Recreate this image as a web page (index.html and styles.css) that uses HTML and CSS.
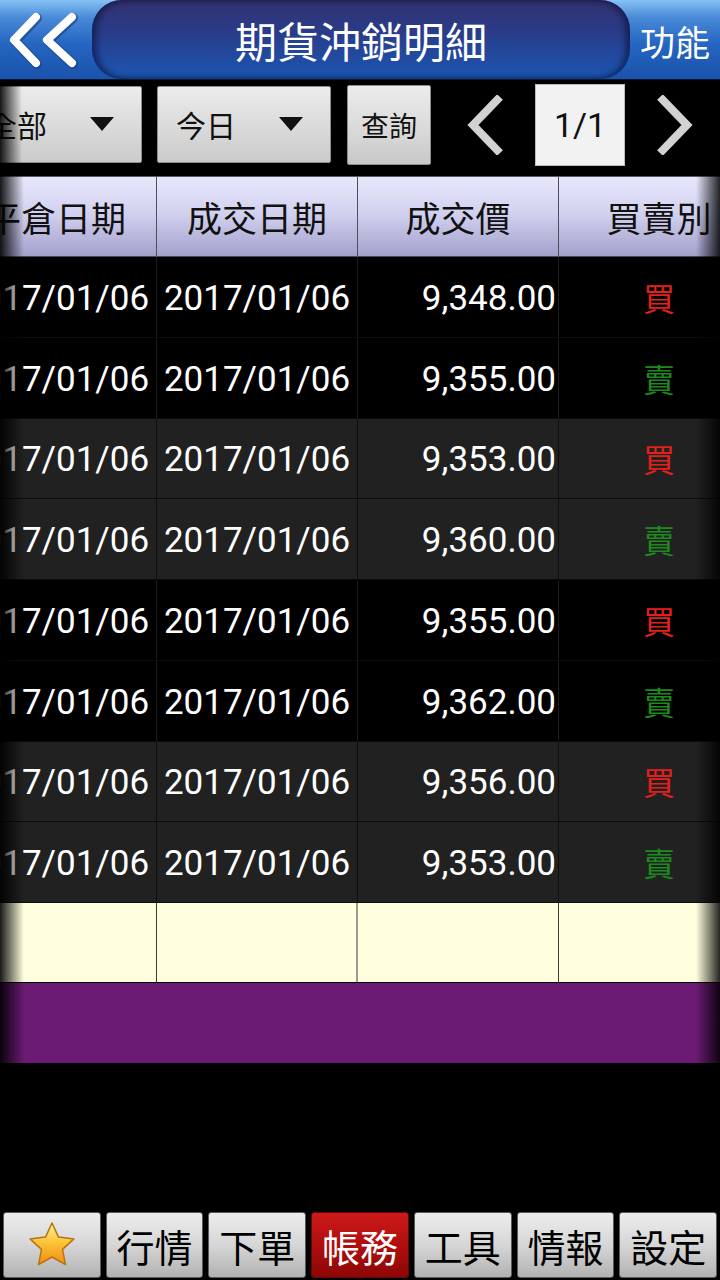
FILE: index.html
```html
<!DOCTYPE html>
<html lang="zh-Hant">
<head>
  <meta charset="UTF-8" />
  <meta name="viewport" content="width=device-width, initial-scale=1.0"/>
  <title>期貨沖銷明細</title>
  <link rel="stylesheet" href="styles.css">
</head>
<body>

  <!-- Header -->
  <header class="topbar">
    <a href="#" class="back-btn">
      <svg width="80" height="60" viewBox="0 0 80 60">
        <polyline class="chev-shadow" points="31,8 9,31 31,54" />
        <polyline class="chev-shadow" points="67,8 42,31 67,54" />
        <polyline class="chev" points="30,7 8,30 30,53" />
        <polyline class="chev" points="66,7 41,30 66,53" />
      </svg>
    </a>
    <h1 class="title">期貨沖銷明細</h1>
    <a href="#" class="func-btn">功能</a>
  </header>

  <!-- Filters -->
  <div class="toolbar">
    <button class="dropdown dropdown-first">全部<span class="caret"></span></button>
    <button class="dropdown">今日<span class="caret"></span></button>
    <button class="query-btn">查詢</button>
    <svg class="pager-arrow pager-prev" width="40" height="60" viewBox="0 0 40 60">
      <polyline points="35,2 8,30 35,58" />
    </svg>
    <div class="page-box">1/1</div>
    <svg class="pager-arrow pager-next" width="40" height="60" viewBox="0 0 40 60">
      <polyline points="5,2 32,30 5,58" />
    </svg>
  </div>

  <!-- Detail table -->
  <div class="grid-wrap">
    <div class="grid">
      <div class="row head">
        <div class="cell">平倉日期</div>
        <div class="cell">成交日期</div>
        <div class="cell">成交價</div>
        <div class="cell">買賣別</div>
      </div>

      <div class="row dark">
        <div class="cell">2017/01/06</div><div class="cell">2017/01/06</div>
        <div class="cell price">9,348.00</div><div class="cell side buy">買</div>
      </div>
      <div class="row dark">
        <div class="cell">2017/01/06</div><div class="cell">2017/01/06</div>
        <div class="cell price">9,355.00</div><div class="cell side sell">賣</div>
      </div>
      <div class="row gray">
        <div class="cell">2017/01/06</div><div class="cell">2017/01/06</div>
        <div class="cell price">9,353.00</div><div class="cell side buy">買</div>
      </div>
      <div class="row gray">
        <div class="cell">2017/01/06</div><div class="cell">2017/01/06</div>
        <div class="cell price">9,360.00</div><div class="cell side sell">賣</div>
      </div>
      <div class="row dark">
        <div class="cell">2017/01/06</div><div class="cell">2017/01/06</div>
        <div class="cell price">9,355.00</div><div class="cell side buy">買</div>
      </div>
      <div class="row dark">
        <div class="cell">2017/01/06</div><div class="cell">2017/01/06</div>
        <div class="cell price">9,362.00</div><div class="cell side sell">賣</div>
      </div>
      <div class="row gray">
        <div class="cell">2017/01/06</div><div class="cell">2017/01/06</div>
        <div class="cell price">9,356.00</div><div class="cell side buy">買</div>
      </div>
      <div class="row gray">
        <div class="cell">2017/01/06</div><div class="cell">2017/01/06</div>
        <div class="cell price">9,353.00</div><div class="cell side sell">賣</div>
      </div>

      <div class="row total">
        <div class="cell"></div><div class="cell"></div>
        <div class="cell"></div><div class="cell"></div>
      </div>
    </div>
    <div class="summary-bar"></div>
  </div>

  <div class="spacer"></div>

  <!-- Bottom nav -->
  <nav class="tabbar">
    <a href="#" class="tab">
      <svg width="50" height="48" viewBox="0 0 50 48">
        <defs>
          <linearGradient id="starFill" x1="0" y1="0" x2="0" y2="1">
            <stop offset="0" stop-color="#fff0a0"/>
            <stop offset="0.45" stop-color="#fcc63a"/>
            <stop offset="1" stop-color="#f08a12"/>
          </linearGradient>
        </defs>
        <polygon points="25,2 31.5,16.1 46.9,17.9 35.5,28.4 38.5,43.6 25,36 11.5,43.6 14.5,28.4 3.1,17.9 18.5,16.1"
                 fill="url(#starFill)" stroke="#b8740e" stroke-width="1.5" stroke-linejoin="round"/>
      </svg>
    </a>
    <a href="#" class="tab">行情</a>
    <a href="#" class="tab">下單</a>
    <a href="#" class="tab active">帳務</a>
    <a href="#" class="tab">工具</a>
    <a href="#" class="tab">情報</a>
    <a href="#" class="tab">設定</a>
  </nav>

</body>
</html>
```

FILE: styles.css
```css
* {
  box-sizing: border-box;
  margin: 0;
  padding: 0;
}

html, body {
  width: 720px;
  height: 1280px;
  background: #000;
  overflow: hidden;
}

body {
  font-family: Roboto, "Noto Sans CJK TC", sans-serif;
  display: flex;
  flex-direction: column;
}

a {
  text-decoration: none;
}

/* Header */
.topbar {
  height: 80px;
  display: flex;
  background: linear-gradient(#86c2f4 0%, #4a8ad8 22%, #2566c2 55%, #1a52aa 100%);
  border-bottom: 1px solid #08173a;
}

.back-btn {
  width: 92px;
  display: flex;
  align-items: center;
  padding-left: 6px;
}

.chev {
  fill: none;
  stroke: #fff;
  stroke-width: 8;
  stroke-linecap: round;
  stroke-linejoin: round;
}

.chev-shadow {
  fill: none;
  stroke: #1b3c7a;
  stroke-width: 10;
  stroke-linecap: round;
  stroke-linejoin: round;
  opacity: 0.6;
}

.title {
  width: 538px;
  display: flex;
  align-items: center;
  justify-content: center;
  color: #fff;
  font-size: 42px;
  font-weight: normal;
  font-family: "Noto Sans CJK TC", sans-serif;
  background: linear-gradient(#333270 0%, #2b3a86 35%, #22499e 70%, #1c56b2 100%);
  border-radius: 30px;
  box-shadow: inset 5px 0 6px rgba(10, 14, 50, 0.55), inset -5px 0 6px rgba(10, 14, 50, 0.55);
}

.func-btn {
  flex: 1;
  display: flex;
  align-items: center;
  justify-content: center;
  color: #fff;
  font-size: 35px;
  font-family: "Noto Sans CJK TC", sans-serif;
  padding-top: 2px;
}

/* Filters */
.toolbar {
  height: 90px;
  display: flex;
  align-items: center;
  position: relative;
  overflow: hidden;
}

.toolbar::before {
  content: "";
  position: absolute;
  left: 0;
  top: 0;
  bottom: 0;
  width: 22px;
  background: linear-gradient(to right, rgba(0, 0, 0, 0.9), rgba(0, 0, 0, 0));
}

.dropdown {
  width: 174px;
  height: 77px;
  margin-right: 15px;
  margin-bottom: 2px;
  display: flex;
  align-items: center;
  justify-content: space-between;
  padding: 0 27px 0 18px;
  font-family: "Noto Sans CJK TC", sans-serif;
  font-size: 30px;
  color: #111;
  background: linear-gradient(#ececec, #d8d8d8 60%, #cbcbcb);
  border: 1px solid #8e8e8e;
  border-radius: 2px;
}

.dropdown-first {
  margin-left: -32px;
}

.caret {
  width: 0;
  height: 0;
  border-left: 12px solid transparent;
  border-right: 12px solid transparent;
  border-top: 14px solid #111;
}

.query-btn {
  width: 84px;
  height: 80px;
  margin-left: 1px;
  font-family: "Noto Sans CJK TC", sans-serif;
  font-size: 28px;
  color: #111;
  background: linear-gradient(#ececec, #d8d8d8 60%, #c8c8c8);
  border: 1px solid #8e8e8e;
  border-radius: 2px;
}

.pager-arrow polyline {
  fill: none;
  stroke: #d2d2d2;
  stroke-width: 8;
}

.pager-prev {
  margin-left: 34px;
}

.page-box {
  width: 90px;
  height: 82px;
  margin-left: 30px;
  display: flex;
  align-items: center;
  justify-content: center;
  font-size: 34px;
  color: #111;
  background: #f2f2f2;
  border: 1px solid #bdbdbd;
}

.pager-next {
  margin-left: 30px;
}

/* Table */
.grid-wrap {
  margin-top: 6px;
  position: relative;
  overflow: hidden;
}

.grid-wrap::before,
.grid-wrap::after {
  content: "";
  position: absolute;
  top: 0;
  bottom: 0;
  width: 24px;
  z-index: 2;
}

.grid-wrap::before {
  left: 0;
  background: linear-gradient(to right, rgba(0, 0, 0, 0.9), rgba(0, 0, 0, 0));
}

.grid-wrap::after {
  right: 0;
  background: linear-gradient(to left, rgba(0, 0, 0, 0.85), rgba(0, 0, 0, 0));
}

.grid {
  width: 804px;
  margin-left: -44px;
}

.row {
  display: grid;
  grid-template-columns: repeat(4, 201px);
  height: 80.75px;
  border-bottom: 1px solid #0c0c0c;
}

.cell {
  display: flex;
  align-items: center;
  justify-content: center;
  border-right: 1px solid #1c1c1c;
  color: #fff;
  font-size: 35px;
  white-space: nowrap;
  padding-top: 3px;
}

.row.head {
  height: 81px;
  border-top: 1px solid #5a5a6a;
  border-bottom: 1px solid #4a4a5e;
  background: linear-gradient(#e8e8fc 0%, #d2d2f0 45%, #a3a1cb 100%);
}

.row.head .cell {
  color: #111;
  font-size: 35px;
  font-family: "Noto Sans CJK TC", sans-serif;
  border-right-color: #4e4e5c;
  padding-top: 0;
}

.row.dark {
  background: #000;
}

.row.gray {
  background: #212121;
}

.row.gray .cell {
  border-right-color: #0e0e0e;
}

.cell.price {
  justify-content: flex-end;
  padding-right: 2px;
}

.cell.side {
  font-size: 32px;
  font-family: "Noto Sans CJK TC", sans-serif;
  padding-top: 0;
}

.buy {
  color: #e2201c;
}

.sell {
  color: #1d8a1d;
}

.row.total {
  height: 80px;
  background: #ffffe0;
  border-bottom: 1px solid #000;
}

.row.total .cell {
  border-right-color: #3a3a3a;
}

.row.total .cell:nth-child(2) {
  border-right: 2px solid #9a9a92;
}

.summary-bar {
  height: 80px;
  background: #6a1a72;
}

.spacer {
  flex: 1;
}

/* Bottom nav */
.tabbar {
  height: 70px;
  display: grid;
  grid-template-columns: repeat(7, 1fr);
  gap: 5px;
  padding: 2px 3px;
}

.tab {
  display: flex;
  align-items: center;
  justify-content: center;
  font-family: "Noto Sans CJK TC", sans-serif;
  font-size: 38px;
  color: #000;
  background: linear-gradient(#ededed, #d6d6d6 50%, #b2b2b2);
  border: 1px solid #5a5a5a;
  border-radius: 3px;
}

.tab.active {
  color: #fff;
  background: linear-gradient(#cc1a1a, #b00e0e 50%, #8e0606);
  border-color: #6a0404;
}
```
